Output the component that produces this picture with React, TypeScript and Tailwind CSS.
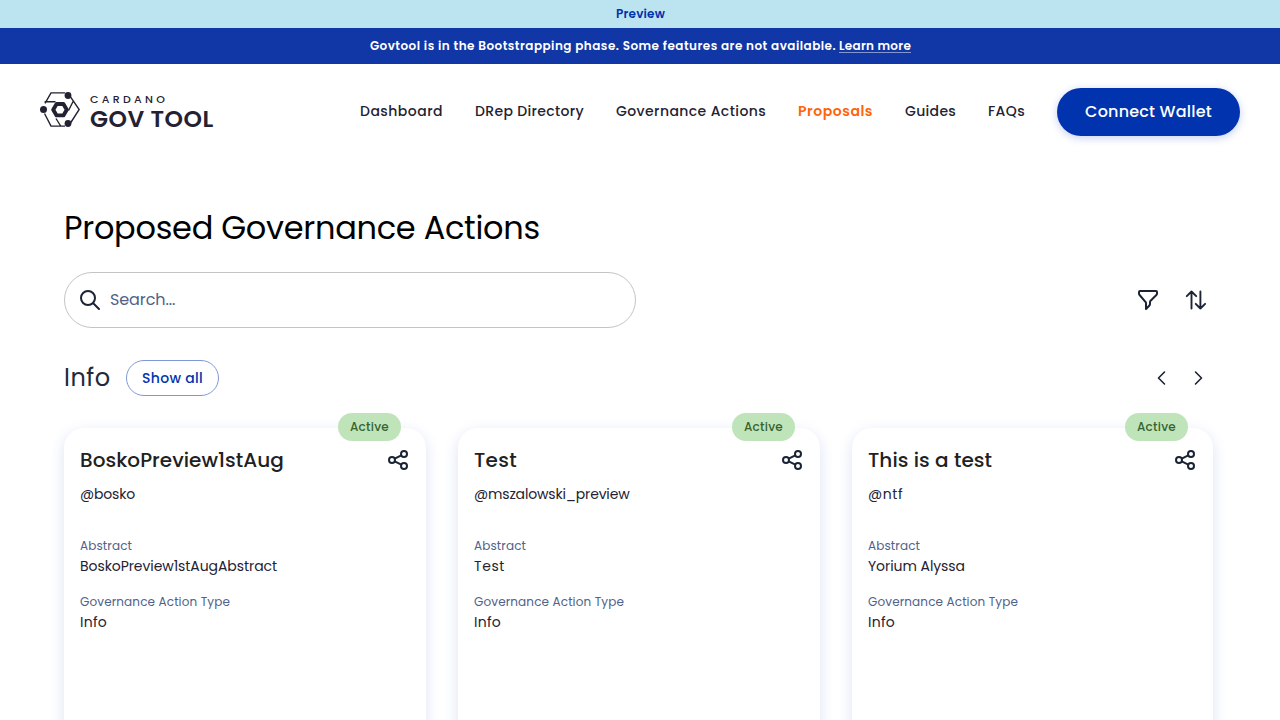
import { clsx } from "clsx";

const navItems = [
  { label: "Dashboard", className: "w-[83px] tracking-[0.47px]" },
  { label: "DRep Directory", className: "w-[109px] tracking-[0.34px]" },
  { label: "Governance Actions", className: "w-[150px] tracking-[0.41px]" },
  { label: "Proposals", className: "w-[75px] font-semibold tracking-[0.54px] text-[#ff640a]" },
  { label: "Guides", className: "w-[51px] tracking-[0.32px]" },
  { label: "FAQs", className: "w-[37px] tracking-[0.4px]" },
];

const cards = [
  {
    title: "BoskoPreview1stAug",
    titleClass: "tracking-[0.05px]",
    author: "@bosko",
    authorClass: "tracking-[-0.18px]",
    abstract: "BoskoPreview1stAugAbstract",
    abstractClass: "tracking-[-0.07px]",
  },
  {
    title: "Test",
    titleClass: "tracking-[0.3px]",
    author: "@mszalowski_preview",
    authorClass: "tracking-[-0.17px]",
    abstract: "Test",
    abstractClass: "tracking-[0.6px]",
  },
  {
    title: "This is a test",
    titleClass: "tracking-[0.06px]",
    author: "@ntf",
    authorClass: "tracking-[0.55px]",
    abstract: "Yorium Alyssa",
    abstractClass: "tracking-[-0.06px]",
  },
];

function Logo() {
  return (
    <div className="flex h-[35px] gap-[10px] text-[#242232]">
      <svg width="40" height="35" viewBox="0 0 40 35" fill="none" stroke="currentColor" strokeWidth="1.4">
        <path d="M25 .9H11L5 11.3M4.5 21.5 11 34.1h14M30.5 4.8 39.2 17.5 30.5 31M4.6 9.8h10.9M33.6 8.5 28.5 18.5M16 26.5l5 8" />
        <circle cx="28" cy="3.5" r="3.4" fill="currentColor" stroke="none" />
        <circle cx="3.5" cy="17.6" r="3.5" fill="currentColor" stroke="none" />
        <circle cx="28" cy="31.5" r="3.4" fill="currentColor" stroke="none" />
        <path d="M16.6 12h6.8l3.4 5.7-3.4 5.7h-6.8l-3.4-5.7z" strokeWidth="3.9" strokeLinejoin="round" />
      </svg>
      <div className="flex flex-col gap-[3px]">
        <span className="h-[13px] text-[11px] font-medium leading-[15px] tracking-[3.3px]">CARDANO</span>
        <span className="h-[19px] whitespace-nowrap text-[23.5px] font-semibold leading-[21px] tracking-[0.45px]">GOV TOOL</span>
      </div>
    </div>
  );
}

function ShareIcon() {
  return (
    <svg width="24" height="24" viewBox="0 0 24 24" fill="none" stroke="#1b2435" strokeWidth="2">
      <circle cx="6" cy="12" r="3" />
      <circle cx="18" cy="6" r="3" />
      <circle cx="18" cy="18" r="3" />
      <path d="m8.7 10.7 6.6-3.4M8.7 13.3l6.6 3.4" />
    </svg>
  );
}

function Card({ card }: { card: (typeof cards)[number] }) {
  return (
    <article className="relative h-[440px] rounded-[20px] bg-white px-4 pt-5 shadow-[0_4px_15px_0_#dde3f5]">
      <span className="absolute -top-[15px] right-[25px] flex h-7 w-[63px] items-center justify-center rounded-full bg-[#c0e4ba] text-xs font-medium tracking-[0.25px] text-[#366330]">
        Active
      </span>
      <div className="flex h-6 items-center justify-between">
        <h3 className={clsx("text-xl font-medium leading-6 text-[#212121]", card.titleClass)}>{card.title}</h3>
        <ShareIcon />
      </div>
      <p className={clsx("mt-3 text-sm leading-5 text-[#242232]", card.authorClass)}>{card.author}</p>
      <p className="mt-8 text-xs leading-5 tracking-[0.12px] text-[#506288]">Abstract</p>
      <p className={clsx("text-sm leading-5 text-[#242232]", card.abstractClass)}>{card.abstract}</p>
      <p className="mt-4 text-xs leading-5 tracking-[0.13px] text-[#506288]">Governance Action Type</p>
      <p className="text-sm leading-5 tracking-[0.25px] text-[#242232]">Info</p>
    </article>
  );
}

export default function App() {
  return (
    <div className="h-[720px] overflow-hidden bg-white font-['Poppins','Inter',sans-serif]">
      <div className="flex h-7 items-center justify-center bg-[#bce4f0] pl-px text-xs font-semibold tracking-[0.2px] text-[#0033ad]">
        Preview
      </div>
      <div className="flex h-9 items-center justify-center gap-[3px] bg-[#1137a6] pl-px text-xs font-semibold text-white">
        <span className="tracking-[0.47px]">Govtool is in the Bootstrapping phase. Some features are not available.</span>
        <a className="border-b border-[#8297d0] leading-[13px] tracking-[0.29px]">Learn more</a>
      </div>

      <header className="flex h-24 items-center justify-between px-10">
        <div className="-mt-[5px]">
          <Logo />
        </div>
        <nav className="flex items-center gap-8 whitespace-nowrap text-sm font-medium text-[#242232]">
          {navItems.map((item) => (
            <a key={item.label} className={clsx("-mt-0.5", item.className)}>{item.label}</a>
          ))}
          <button className="h-12 w-[183px] rounded-full bg-[#0033ad] text-base font-medium tracking-[0.2px] text-white shadow-[0_2px_8px_0_#c7cff0]">
            Connect Wallet
          </button>
        </nav>
      </header>

      <main className="px-16 pt-12">
        <h1 className="h-10 whitespace-nowrap text-[32px] leading-10 tracking-[-0.28px] text-black">Proposed Governance Actions</h1>

        <div className="mt-6 flex h-14 items-center justify-between">
          <div className="flex h-14 w-[572px] items-center gap-2 rounded-full border border-[#c4c4c4] px-[13px]">
            <svg width="24" height="24" viewBox="0 0 24 24" fill="none" stroke="#1b2435" strokeWidth="2" strokeLinecap="round">
              <circle cx="10" cy="10" r="7" />
              <path d="m15.2 15.2 5.8 5.8" />
            </svg>
            <span className="text-base tracking-[-0.1px] text-[#506288]">Search...</span>
          </div>
          <div className="flex gap-6 pr-2">
            <svg width="24" height="24" viewBox="0 0 24 24" fill="none" stroke="#1b2435" strokeWidth="2" strokeLinecap="round" strokeLinejoin="round">
              <path d="M4 3h16a1 1 0 0 1 1 1v1.6a2 2 0 0 1-.6 1.4l-5.8 5.8a2 2 0 0 0-.6 1.4v1.9a2 2 0 0 1-.6 1.4L10 21v-5.8a2 2 0 0 0-.6-1.4L3.6 7A2 2 0 0 1 3 5.6V4a1 1 0 0 1 1-1Z" />
            </svg>
            <svg width="24" height="24" viewBox="0 0 24 24" fill="none" stroke="#1b2435" strokeWidth="1.9" strokeLinecap="round" strokeLinejoin="round">
              <path d="M7.5 20.5v-17M2.8 8.2l4.7-4.7 4.7 4.7M16.4 3.5v17M11.7 15.8l4.7 4.7 4.7-4.7" />
            </svg>
          </div>
        </div>

        <div className="mt-8 flex h-9 items-center justify-between">
          <div className="flex items-center">
            <h2 className="w-[62px] text-2xl tracking-[0.5px] text-[#212a3d]">Info</h2>
            <button className="h-9 w-[93px] rounded-full border border-[#8099d6] text-sm font-medium tracking-[0.3px] text-[#0033ad]">
              Show all
            </button>
          </div>
          <div className="flex gap-3 pr-[6px] text-[#1b2435]">
            <svg width="24" height="24" viewBox="0 0 24 24" fill="none" stroke="currentColor" strokeWidth="1.6" strokeLinecap="round" strokeLinejoin="round">
              <path d="m14.5 6-6 6 6 6" />
            </svg>
            <svg width="24" height="24" viewBox="0 0 24 24" fill="none" stroke="currentColor" strokeWidth="1.6" strokeLinecap="round" strokeLinejoin="round">
              <path d="m9.5 6 6 6-6 6" />
            </svg>
          </div>
        </div>

        <section className="mt-8 grid w-[1149px] grid-cols-[362px_362px_361px] gap-8">
          {cards.map((card) => (
            <Card key={card.title} card={card} />
          ))}
        </section>
      </main>
    </div>
  );
}
